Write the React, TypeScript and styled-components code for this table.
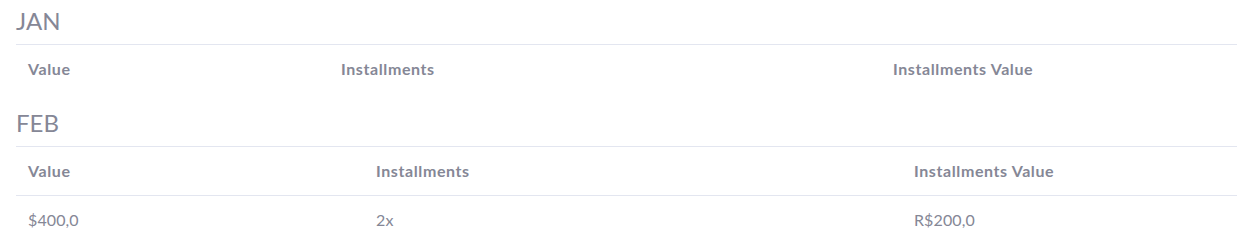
import styled, { createGlobalStyle } from "styled-components";

const GlobalStyle = createGlobalStyle`
  body {
    margin: 0;
    background: #fff;
    font-family: Lato, "Noto Sans", "Liberation Sans", sans-serif;
    font-size: 16px;
    line-height: 1.5;
    color: #858796;
    overflow: hidden;
  }
`;

const Page = styled.div`
  padding: 7px 0 0 16px;
`;

const MonthSection = styled.section`
  &:last-child table {
    margin-bottom: 0;
  }
`;

const MonthTitle = styled.h4`
  margin: 0 0 8px;
  font-size: 24px;
  font-weight: 400;
  line-height: 1.2;
  color: #858796;
`;

const Table = styled.table`
  width: 100%;
  margin-bottom: 16px;
  border-collapse: collapse;
  table-layout: fixed;
  color: #858796;
`;

const Th = styled.th`
  padding: 12px;
  text-align: left;
  font-weight: 700;
  letter-spacing: 0.6px;
  border-top: 1px solid #e3e6f0;
`;

const Td = styled.td`
  padding: 12px;
  text-align: left;
  letter-spacing: 0.1px;
  border-top: 1px solid #e3e6f0;
`;

interface Installment {
  value: string;
  count: string;
  each: string;
}

interface Month {
  name: string;
  widths: [number, number];
  rows: Installment[];
}

const months: Month[] = [
  { name: "JAN", widths: [313, 552], rows: [] },
  {
    name: "FEB",
    widths: [348, 538],
    rows: [{ value: "$400,0", count: "2x", each: "R$200,0" }],
  },
];

const MonthTable = ({ month }: { month: Month }) => (
  <MonthSection>
    <MonthTitle>{month.name}</MonthTitle>
    <Table>
      <colgroup>
        <col style={{ width: month.widths[0] }} />
        <col style={{ width: month.widths[1] }} />
        <col />
      </colgroup>
      <thead>
        <tr>
          <Th>Value</Th>
          <Th>Installments</Th>
          <Th>Installments Value</Th>
        </tr>
      </thead>
      <tbody>
        {month.rows.map((row, i) => (
          <tr key={i}>
            <Td>{row.value}</Td>
            <Td>{row.count}</Td>
            <Td>{row.each}</Td>
          </tr>
        ))}
      </tbody>
    </Table>
  </MonthSection>
);

const App = () => (
  <>
    <GlobalStyle />
    <Page>
      {months.map((m) => (
        <MonthTable key={m.name} month={m} />
      ))}
    </Page>
  </>
);

export default App;
